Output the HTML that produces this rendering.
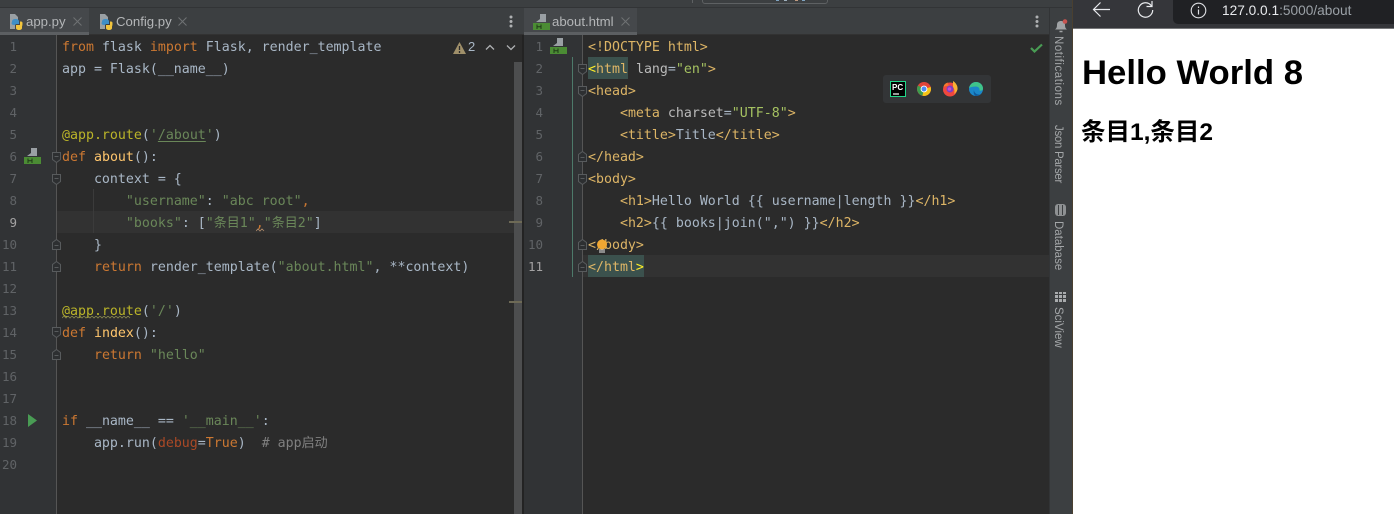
<!DOCTYPE html>
<html><head><meta charset="utf-8"><style>
html,body{margin:0;padding:0;width:1394px;height:514px;overflow:hidden;background:#2b2b2b}
*{box-sizing:border-box}
.a{position:absolute}
.l{position:absolute;margin-top:2px;height:22px;line-height:22px;white-space:pre;font:13.28px/22px "DejaVu Sans Mono","Noto Sans CJK SC",monospace;color:#a9b7c6}
.n{position:absolute;margin-top:1px;height:22px;width:20px;text-align:right;font:12.5px/22px "DejaVu Sans Mono",monospace;color:#606366;white-space:pre}
.k{color:#cc7832}.s{color:#6a8759}.d{color:#bbb529}.f{color:#ffc66d}.t{color:#ddb566}.c{color:#808080}.w{color:#aa4926}.v{color:#a5c261}.b{color:#bababa}
.z{font-size:13px;display:inline-block}
.tab{position:absolute;font:13.2px/26px "Liberation Sans",sans-serif;color:#b4b6b8;white-space:pre}
.side{position:absolute;left:1050px;writing-mode:vertical-rl;font:11.5px/16px "Liberation Sans",sans-serif;color:#a4a7a9;white-space:pre}
</style></head><body>
<!-- chrome -->
<div class="a" style="left:0;top:0;width:1072px;height:7px;background:#3c3f41"></div>
<div class="a" style="left:0;top:7px;width:1072px;height:1px;background:#323436"></div>
<div class="a" style="left:692px;top:0;width:1px;height:3px;background:#5e6163"></div>
<div class="a" style="left:702px;top:-6px;width:126px;height:10px;border:1px solid #5e6163;border-radius:3px"></div>
<div class="a" style="left:776px;top:0;width:3px;height:1px;background:#7fa3c0"></div>
<div class="a" style="left:784px;top:0;width:3px;height:1px;background:#9fb0bd"></div>
<div class="a" style="left:795px;top:0;width:3px;height:1px;background:#c09a7f"></div>
<div class="a" style="left:802px;top:0;width:3px;height:1px;background:#7fa3c0"></div>
<div class="a" style="left:0;top:8px;width:524px;height:26px;background:#3c3f41"></div>
<div class="a" style="left:524px;top:8px;width:526px;height:26px;background:#3c3f41"></div>
<div class="a" style="left:0;top:34px;width:1050px;height:1px;background:#323232"></div>
<div class="a" style="left:0;top:8px;width:89px;height:27px;background:#45484b"></div>
<div class="a" style="left:0;top:32px;width:89px;height:3px;background:#5c5f62"></div>
<div class="a" style="left:524px;top:8px;width:113px;height:27px;background:#45484b"></div>
<div class="a" style="left:524px;top:32px;width:113px;height:3px;background:#5c5f62"></div>

<!-- editor panes -->
<div class="a" style="left:0;top:35px;width:57px;height:479px;background:#313335"></div>
<div class="a" style="left:56px;top:35px;width:1px;height:479px;background:#555"></div>
<div class="a" style="left:514px;top:35px;width:8px;height:479px;background:#2b2b2b"></div>
<div class="a" style="left:57px;top:211px;width:465px;height:22px;background:#323232"></div>
<div class="a" style="left:0;top:211px;width:56px;height:22px;background:#313335"></div>
<div class="a" style="left:514px;top:62px;width:8px;height:452px;background:#4d4e4f"></div>
<div class="a" style="left:509px;top:221px;width:14px;height:2px;background:#6e6a56"></div>
<div class="a" style="left:509px;top:301px;width:14px;height:2px;background:#6e6a56"></div>
<div class="a" style="left:522px;top:35px;width:2px;height:479px;background:#232323"></div>
<div class="a" style="left:524px;top:35px;width:59px;height:479px;background:#313335"></div>
<div class="a" style="left:582px;top:35px;width:1px;height:479px;background:#555"></div>
<div class="a" style="left:572px;top:57px;width:1px;height:220px;background:#4d7a6a"></div>
<div class="a" style="left:583px;top:255px;width:467px;height:22px;background:#323232"></div>
<div class="a" style="left:588px;top:57px;width:40px;height:22px;background:#3b514d"></div>
<div class="a" style="left:588px;top:255px;width:56px;height:22px;background:#3b514d"></div>
<div class="a" style="left:93px;top:189px;width:1px;height:44px;background:#3b3b3b"></div>

<!-- tabs -->
<svg class="a" style="left:9px;top:13px" width="15" height="18" viewBox="0 0 15 18"><path d="M1 1h5l3 3v5H6v7H1z" fill="#9aa0a4"/><path d="M3 9c0-2 1-3 3.500-3S10 7 10 8.500V11H6.500v1H5c-1.500 0-2.500-.7-2.500-2z" fill="#3f8fc7"/><path d="M13.500 10c0-.8-.5-1.500-1.500-1.500h-1V12H7v3c0 1.300 1.500 2 3 2s3-.7 3-2v-1.500c.5-1 .5-2.500.5-3.500z" fill="#f2c53d"/></svg>
<div class="tab" style="left:26px;top:9px">app.py</div>
<svg class="a" style="left:73px;top:17px" width="9" height="9"><path d="M.5.5l8 8M8.500.5l-8 8" stroke="#6f7274"/></svg>
<svg class="a" style="left:99px;top:13px" width="15" height="18" viewBox="0 0 15 18"><path d="M1 1h5l3 3v5H6v7H1z" fill="#9aa0a4"/><path d="M3 9c0-2 1-3 3.500-3S10 7 10 8.500V11H6.500v1H5c-1.500 0-2.500-.7-2.500-2z" fill="#3f8fc7"/><path d="M13.500 10c0-.8-.5-1.500-1.500-1.500h-1V12H7v3c0 1.300 1.500 2 3 2s3-.7 3-2v-1.500c.5-1 .5-2.500.5-3.500z" fill="#f2c53d"/></svg>
<div class="tab" style="left:116px;top:9px">Config.py</div>
<svg class="a" style="left:178px;top:17px" width="9" height="9"><path d="M.5.5l8 8M8.500.5l-8 8" stroke="#6f7274"/></svg>
<svg class="a" style="left:533px;top:14px" width="18" height="16" viewBox="0 0 18 16"><path d="M3 8l4-3V0h6v8z" fill="#9aa0a4"/><rect y="9" width="17" height="7" fill="#4b8c34"/><path d="M4 10.500v4.500M8 10.500v4.500M4 12.700h4" stroke="#1f3a17" fill="none"/></svg>
<div class="tab" style="left:552px;top:9px">about.html</div>
<svg class="a" style="left:621px;top:17px" width="9" height="9"><path d="M.5.5l8 8M8.500.5l-8 8" stroke="#6f7274"/></svg>
<svg class="a" style="left:509px;top:15px" width="4" height="13"><circle cx="2" cy="2" r="1.500" fill="#afb1b3"/><circle cx="2" cy="6.500" r="1.500" fill="#afb1b3"/><circle cx="2" cy="11" r="1.500" fill="#afb1b3"/></svg>
<svg class="a" style="left:1035px;top:15px" width="4" height="13"><circle cx="2" cy="2" r="1.500" fill="#afb1b3"/><circle cx="2" cy="6.500" r="1.500" fill="#afb1b3"/><circle cx="2" cy="11" r="1.500" fill="#afb1b3"/></svg>

<!-- left gutter numbers -->
<div class="n" style="left:-3px;top:35px">1</div><div class="n" style="left:-3px;top:57px">2</div><div class="n" style="left:-3px;top:79px">3</div><div class="n" style="left:-3px;top:101px">4</div><div class="n" style="left:-3px;top:123px">5</div><div class="n" style="left:-3px;top:145px">6</div><div class="n" style="left:-3px;top:167px">7</div><div class="n" style="left:-3px;top:189px">8</div><div class="n" style="left:-3px;top:211px;color:#a4a3a3">9</div><div class="n" style="left:-3px;top:233px">10</div><div class="n" style="left:-3px;top:255px">11</div><div class="n" style="left:-3px;top:277px">12</div><div class="n" style="left:-3px;top:299px">13</div><div class="n" style="left:-3px;top:321px">14</div><div class="n" style="left:-3px;top:343px">15</div><div class="n" style="left:-3px;top:365px">16</div><div class="n" style="left:-3px;top:387px">17</div><div class="n" style="left:-3px;top:409px">18</div><div class="n" style="left:-3px;top:431px">19</div><div class="n" style="left:-3px;top:453px">20</div>

<!-- right gutter numbers -->
<div class="n" style="left:523px;top:35px">1</div><div class="n" style="left:523px;top:57px">2</div><div class="n" style="left:523px;top:79px">3</div><div class="n" style="left:523px;top:101px">4</div><div class="n" style="left:523px;top:123px">5</div><div class="n" style="left:523px;top:145px">6</div><div class="n" style="left:523px;top:167px">7</div><div class="n" style="left:523px;top:189px">8</div><div class="n" style="left:523px;top:211px">9</div><div class="n" style="left:523px;top:233px">10</div><div class="n" style="left:523px;top:255px;color:#a4a3a3">11</div>

<!-- gutter icons -->
<svg class="a" style="left:24px;top:148px" width="18" height="17" viewBox="0 0 18 17"><path d="M3 8l4-3V0h6v8z" fill="#9aa0a4"/><rect y="9" width="17" height="7" fill="#4b8c34"/><path d="M4 10.500v4.500M8 10.500v4.500M4 12.700h4" stroke="#1f3a17" fill="none"/></svg>
<svg class="a" style="left:550px;top:38px" width="18" height="17" viewBox="0 0 18 17"><path d="M3 8l4-3V0h6v8z" fill="#9aa0a4"/><rect y="9" width="17" height="7" fill="#4b8c34"/><path d="M4 10.500v4.500M8 10.500v4.500M4 12.700h4" stroke="#1f3a17" fill="none"/></svg>
<svg class="a" style="left:28px;top:414px" width="10" height="13"><path d="M0 0l9 6.500L0 13z" fill="#499c54"/></svg>

<!-- fold marks -->
<svg class="a" style="left:50px;top:145px" width="14" height="330" fill="#2d2f31" stroke="#585b5d">
<path d="M2.500 7.500h8v7l-4 3-4-3z"/><path d="M4.500 11.500h4"/>
<path d="M2.500 29.500h8v7l-4 3-4-3z"/><path d="M4.500 33.500h4"/>
<path d="M2.500 104.500v-7l4-3 4 3v7z"/><path d="M4.500 100.500h4"/>
<path d="M2.500 126.500v-7l4-3 4 3v7z"/><path d="M4.500 122.500h4"/>
<path d="M2.500 182.500h8v7l-4 3-4-3z"/><path d="M4.500 186.500h4"/>
<path d="M2.500 214.500v-7l4-3 4 3v7z"/><path d="M4.500 210.500h4"/>
</svg>
<svg class="a" style="left:576px;top:57px" width="14" height="220" fill="#2d2f31" stroke="#585b5d">
<path d="M2.500 7.500h8v7l-4 3-4-3z"/><path d="M4.500 11.500h4"/>
<path d="M2.500 29.500h8v7l-4 3-4-3z"/><path d="M4.500 33.500h4"/>
<path d="M2.500 104.500v-7l4-3 4 3v7z"/><path d="M4.500 100.500h4"/>
<path d="M2.500 117.500h8v7l-4 3-4-3z"/><path d="M4.500 121.500h4"/>
<path d="M2.500 192.500v-7l4-3 4 3v7z"/><path d="M4.500 188.500h4"/>
<path d="M2.500 214.500v-7l4-3 4 3v7z"/><path d="M4.500 210.500h4"/>
</svg>

<!-- left code -->
<div class="l" style="left:62px;top:35px"><span class="k">from</span> flask <span class="k">import</span> Flask, render_template</div>
<div class="l" style="left:62px;top:57px">app = Flask(__name__)</div>
<div class="l" style="left:62px;top:123px"><span class="d">@app.route</span>(<span class="s">'<u style="text-underline-offset:2px">/about</u>'</span>)</div>
<div class="l" style="left:62px;top:145px"><span class="k">def</span> <span class="f">about</span>():</div>
<div class="l" style="left:62px;top:167px">    context = {</div>
<div class="l" style="left:62px;top:189px">        <span class="s">"username"</span>: <span class="s">"abc root"</span><span class="k">,</span></div>
<div class="l" style="left:62px;top:211px">        <span class="s">"books"</span>: [<span class="s">"<span class="z">条目</span>1"</span><span class="k">,</span><span class="s">"<span class="z">条目</span>2"</span>]</div>
<div class="l" style="left:62px;top:233px">    }</div>
<div class="l" style="left:62px;top:255px">    <span class="k">return</span> render_template(<span class="s">"about.html"</span>, **context)</div>
<div class="l" style="left:62px;top:299px"><span class="d">@app.route</span>(<span class="s">'/'</span>)</div>
<svg class="a" style="left:62px;top:316px" width="120" height="3"><path d="M0 2l2-2 2 2 2-2 2 2 2-2 2 2 2-2 2 2 2-2 2 2 2-2 2 2 2-2 2 2 2-2 2 2 2-2 2 2 2-2 2 2 2-2 2 2 2-2 2 2 2-2 2 2 2-2 2 2 2-2 2 2 2-2 2 2 2-2 2 2" fill="none" stroke="#8a8a50" stroke-width=".8"/></svg>
<svg class="a" style="left:256px;top:228px" width="9" height="4"><path d="M0 3l2-2 2 2 2-2 2 2" fill="none" stroke="#b08a6a" stroke-width=".8"/></svg>
<div class="l" style="left:62px;top:321px"><span class="k">def</span> <span class="f">index</span>():</div>
<div class="l" style="left:62px;top:343px">    <span class="k">return</span> <span class="s">"hello"</span></div>
<div class="l" style="left:62px;top:409px"><span class="k">if</span> __name__ == <span class="s">'__main__'</span>:</div>
<div class="l" style="left:62px;top:431px">    app.run(<span class="w">debug</span>=<span class="k">True</span>)  <span class="c"># app<span class="z">启动</span></span></div>

<!-- inspection widget -->
<svg class="a" style="left:453px;top:42px" width="13" height="12"><path d="M6.500 0L13 12H0z" fill="#a0906a"/><path d="M6.500 4v4M6.500 9v2" stroke="#2b2b2b" stroke-width="1.300"/></svg>
<div class="a" style="left:468px;top:38px;font:13px/18px 'Liberation Sans';color:#a9b7c6">2</div>
<svg class="a" style="left:485px;top:44px" width="10" height="7"><path d="M1 5.500l4-4 4 4" fill="none" stroke="#afb1b3" stroke-width="1.300"/></svg>
<svg class="a" style="left:506px;top:44px" width="10" height="7"><path d="M1 1.500l4 4 4-4" fill="none" stroke="#afb1b3" stroke-width="1.300"/></svg>

<!-- right code -->
<div class="l" style="left:588px;top:35px"><span class="t">&lt;!DOCTYPE html&gt;</span></div>
<div class="l" style="left:588px;top:57px"><span style="color:#ffef28">&lt;</span><span class="t">html</span> <span class="b">lang</span>=<span class="v">"en"</span><span class="t">&gt;</span></div>
<div class="l" style="left:588px;top:79px"><span class="t">&lt;head&gt;</span></div>
<div class="l" style="left:588px;top:101px">    <span class="t">&lt;meta</span> <span class="b">charset</span>=<span class="v">"UTF-8"</span><span class="t">&gt;</span></div>
<div class="l" style="left:588px;top:123px">    <span class="t">&lt;title&gt;</span>Title<span class="t">&lt;/title&gt;</span></div>
<div class="l" style="left:588px;top:145px"><span class="t">&lt;/head&gt;</span></div>
<div class="l" style="left:588px;top:167px"><span class="t">&lt;body&gt;</span></div>
<div class="l" style="left:588px;top:189px">    <span class="t">&lt;h1&gt;</span>Hello World {{ username|length }}<span class="t">&lt;/h1&gt;</span></div>
<div class="l" style="left:588px;top:211px">    <span class="t">&lt;h2&gt;</span>{{ books|join(",") }}<span class="t">&lt;/h2&gt;</span></div>
<div class="l" style="left:588px;top:233px"><span class="t">&lt;/body&gt;</span></div>
<div class="l" style="left:588px;top:255px"><span class="t">&lt;/html</span><span style="color:#ffef28">&gt;</span></div>
<svg class="a" style="left:596px;top:238px" width="13" height="15"><circle cx="6" cy="6.500" r="5" fill="#f0a732"/><path d="M3 12h6M3 14h6" stroke="#c4c4c4" stroke-width="1.200"/></svg>
<svg class="a" style="left:1030px;top:43px" width="13" height="10"><path d="M1 5l3.500 3.500L12 1.500" fill="none" stroke="#499c54" stroke-width="2.200"/></svg>

<!-- browser popup -->
<div class="a" style="left:883px;top:75px;width:108px;height:28px;background:#333537;border-radius:3px"></div>
<svg class="a" style="left:890px;top:81px" width="16" height="16"><rect x=".5" y=".5" width="15" height="15" fill="#000" stroke="#21d789"/><path d="M3 13h6" stroke="#fff" stroke-width="1.200"/></svg>
<div class="a" style="left:892px;top:82px;font:bold 8px/11px 'Liberation Sans';color:#fff">PC</div>
<svg class="a" style="left:917px;top:82px" width="14" height="14" viewBox="0 0 14 14"><circle cx="7" cy="7" r="7" fill="#e0453a"/><path d="M7 7L1 3.500A7 7 0 0 0 5.500 13.800z" fill="#3c9d4f"/><path d="M7 7l-1.500 6.800A7 7 0 0 0 13.700 5z" fill="#f5c518"/><circle cx="7" cy="7" r="3.400" fill="#fff"/><circle cx="7" cy="7" r="2.500" fill="#4c8bf5"/></svg>
<svg class="a" style="left:942px;top:80px" width="17" height="17" viewBox="0 0 17 17"><circle cx="8" cy="9.500" r="7" fill="#f0483e"/><path d="M11 1c3 2 5 5 4.500 8.500-.5 2-2 3.500-3.500 4.500 1-2 .5-5-1-7z" fill="#f9b233"/><path d="M1.500 7C2 4 4 3 6 2.500 5 4 6 5 8 5c-3 1-5 1-6.500 2z" fill="#f77a2c"/><circle cx="8" cy="9" r="3.500" fill="#7d3fc4"/><circle cx="7.500" cy="9" r="1.800" fill="#c94cd0"/></svg>
<svg class="a" style="left:969px;top:82px" width="14" height="14" viewBox="0 0 14 14"><circle cx="7" cy="7" r="7" fill="#1b87c9"/><path d="M0 6C1 2 4 0 7 0c4 0 7 3 7 6.500 0 2-2 2.500-3.500 2C11 6.500 9.500 4.500 7 4.500 4 4.500 1.500 5 0 6z" fill="#3fc48a"/><path d="M5 8c0 3 3 5 6 4.500-1 1-2.500 1.500-4 1.500C5.500 14 4 11 5 8z" fill="#0f5a9c"/></svg>

<!-- right tool strip -->
<div class="a" style="left:1050px;top:8px;width:22px;height:506px;background:#3c3f41"></div>
<div class="a" style="left:1049px;top:8px;width:1px;height:506px;background:#323436"></div>
<div class="a" style="left:1072px;top:0;width:1px;height:514px;background:#4a4030"></div>
<svg class="a" style="left:1055px;top:19px" width="14" height="14"><path d="M0 10.500c1.500-1 2-2.200 2-4.700C2 3 3.800 2 6 2s4 1 4 3.800c0 2.500.5 3.700 2 4.700z" fill="#a0a3a5"/><path d="M4.500 12.500h3" stroke="#a0a3a5" stroke-width="1.500"/><circle cx="10" cy="2.500" r="2.300" fill="#c75450"/></svg>
<div class="side" style="top:36px;letter-spacing:.55px">Notifications</div>
<div class="side" style="top:125px;letter-spacing:-.3px">Json Parser</div>
<svg class="a" style="left:1055px;top:204px" width="11" height="12"><rect width="11" height="12" rx="3" fill="#8e9193"/><path d="M3.500 1v10M7.500 1v10" stroke="#3c3f41"/></svg>
<div class="side" style="top:221px">Database</div>
<svg class="a" style="left:1055px;top:292px" width="11" height="10" fill="#a8abad"><rect width="3" height="2"/><rect x="4" width="3" height="2"/><rect x="8" width="3" height="2"/><rect y="3" width="3" height="3"/><rect x="4" y="3" width="3" height="3"/><rect x="8" y="3" width="3" height="3"/><rect y="7" width="3" height="3"/><rect x="4" y="7" width="3" height="3"/><rect x="8" y="7" width="3" height="3"/></svg>
<div class="side" style="top:307px">SciView</div>

<!-- browser -->
<div class="a" style="left:1073px;top:0;width:321px;height:28px;background:#35363a"></div>
<div class="a" style="left:1073px;top:28px;width:321px;height:1px;background:#77787a"></div>
<div class="a" style="left:1073px;top:29px;width:321px;height:485px;background:#fff"></div>
<div class="a" style="left:1173px;top:0;width:221px;height:24px;background:#202124;border-bottom-left-radius:5px"></div>
<svg class="a" style="left:1092px;top:1px" width="19" height="16"><path d="M18 8.500H2M8.500 1.500l-7 7 7 7" fill="none" stroke="#e8eaed" stroke-width="1.200"/></svg>
<svg class="a" style="left:1136px;top:0" width="19" height="19"><path d="M15.500 6A7.200 7.200 0 1 0 16.700 10" fill="none" stroke="#e8eaed" stroke-width="1.200"/><path d="M16 1v5.500h-5.500" fill="none" stroke="#e8eaed" stroke-width="1.200"/></svg>
<svg class="a" style="left:1190px;top:2px" width="17" height="17"><circle cx="8.500" cy="8.500" r="7.300" fill="none" stroke="#dfe1e5" stroke-width="1.100"/><path d="M8.500 7.500v5M8.500 4.500v1.500" stroke="#dfe1e5" stroke-width="1.200"/></svg>
<div class="a" style="left:1222px;top:1px;font:13.7px/19px 'Liberation Sans',sans-serif;color:#e8eaed;white-space:pre">127.0.0.1<span style="color:#9aa0a6">:5000/about</span></div>
<div class="a" style="left:1082px;top:51px;font:bold 34.7px/44px 'Liberation Sans',sans-serif;color:#000;white-space:pre">Hello World 8</div>
<div class="a" style="left:1081px;top:116px;font:bold 24.5px/34px 'Liberation Sans','Noto Sans CJK SC',sans-serif;color:#000;white-space:pre">条目1,条目2</div>
</body></html>
